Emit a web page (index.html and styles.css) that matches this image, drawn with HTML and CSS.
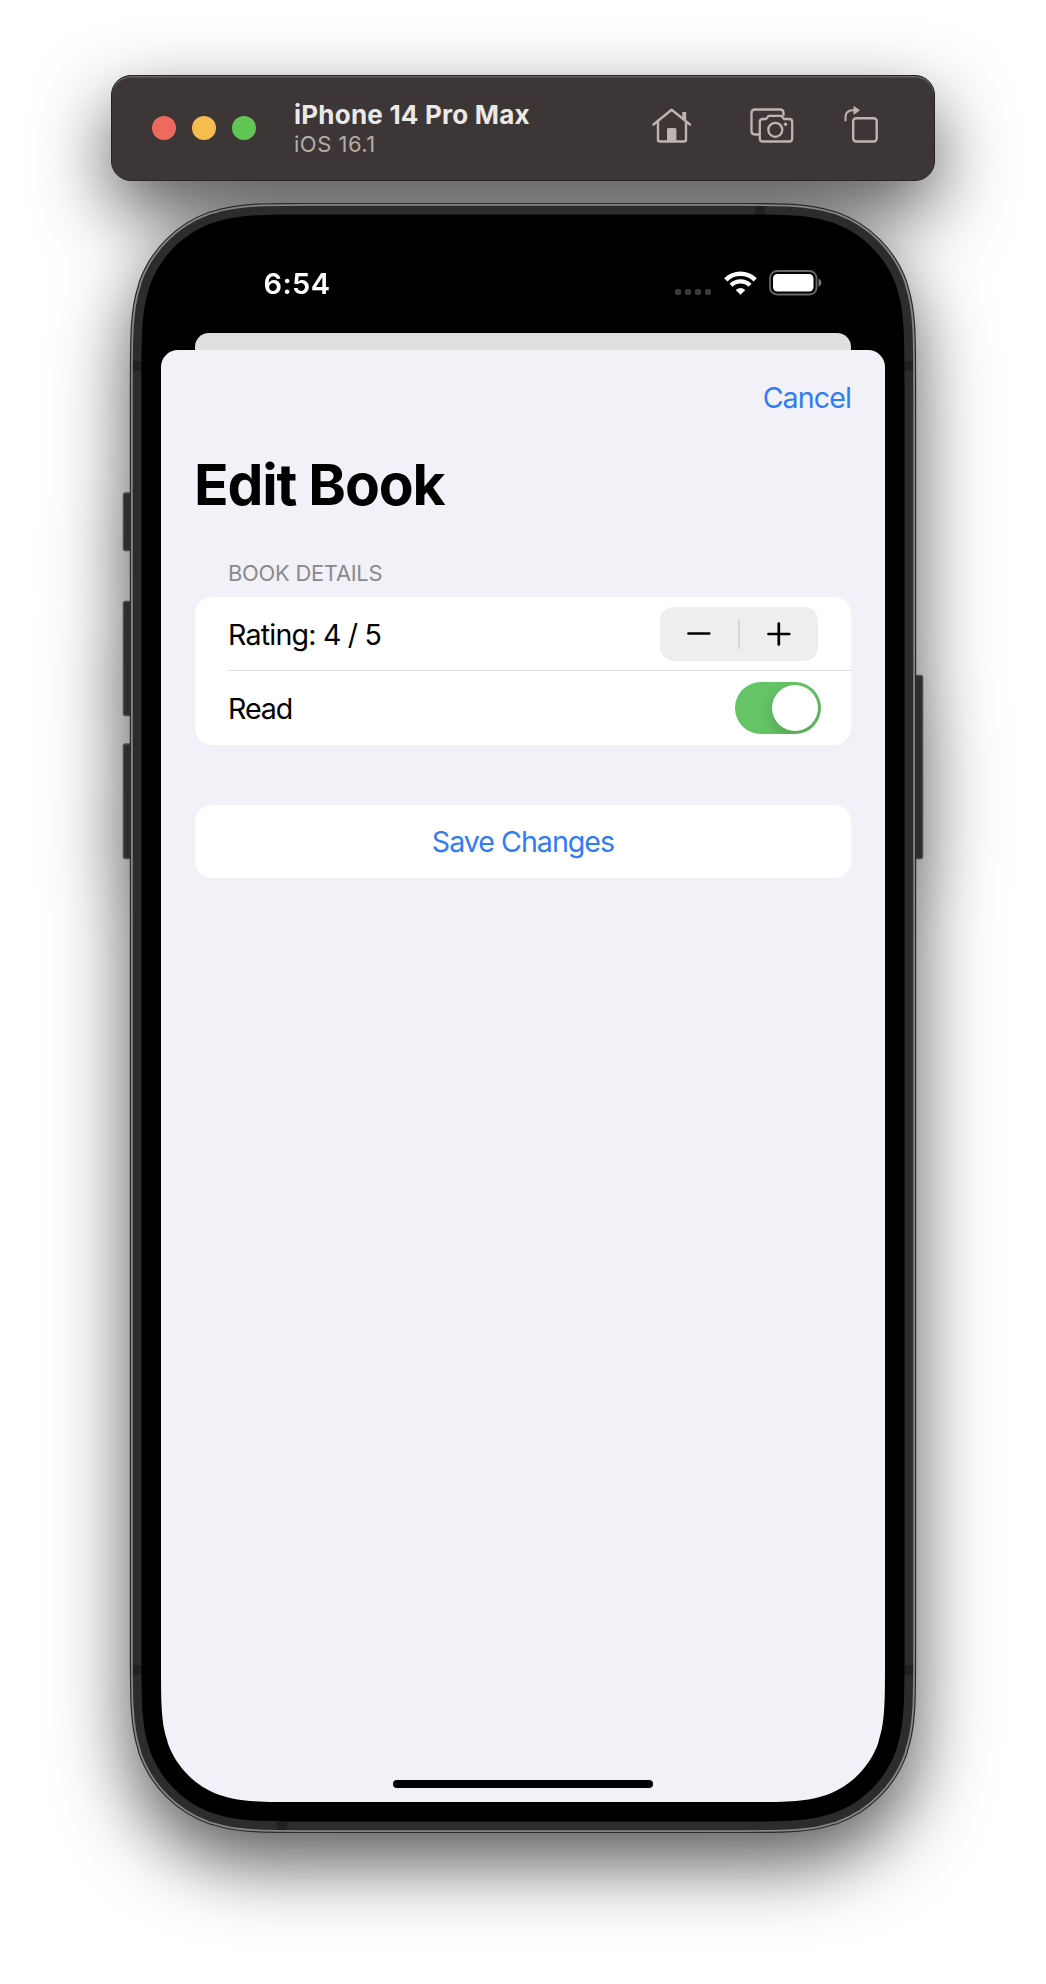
FILE: index.html
```html
<!DOCTYPE html>
<html lang="en">
<head>
<meta charset="utf-8">
<title>Edit Book</title>
<link rel="stylesheet" href="styles.css">
</head>
<body>
<main class="simulator">
  <header class="toolbar">
    <div class="lights">
      <span class="light light-close"></span>
      <span class="light light-min"></span>
      <span class="light light-zoom"></span>
    </div>
    <div class="device-name">
      <strong class="device-title">iPhone 14 Pro Max</strong>
      <span class="device-os">iOS 16.1</span>
    </div>
    <div class="tools">
      <svg class="tool" width="40" height="36" viewBox="0 0 40 36">
        <path d="M1.5 16.5 19.6 1.8 38 16.5M6 14V31.5q0 2 2 2H32q2 0 2-2V14M32.2 11V5" fill="none" stroke="currentColor" stroke-width="2.4" stroke-linecap="round" stroke-linejoin="round"/>
        <path d="M30.2 4h4v9l-4-3z" fill="currentColor"/>
        <path d="M15 33.5V21.5q0-1.5 1.5-1.5h6.400q1.500 0 1.500 1.500V33.500z" fill="currentColor"/>
      </svg>
      <svg class="tool" width="44" height="36" viewBox="0 0 44 36">
        <g fill="none" stroke="currentColor" stroke-width="2.300" stroke-linejoin="round">
          <path d="M33.500 8V5q0-3.500-3.500-3.500H5Q1.500 1.500 1.500 5V23q0 3.500 3.500 3.500H9.500"/>
          <path d="M12.800 11H16l2.700-3.200h12.600l2.700 3.200h5.200q3 0 3 3V30.500q0 3-3 3H12.800q-3 0-3-3V14q0-3 3-3z"/>
          <circle cx="25.300" cy="21.800" r="7"/>
        </g>
        <circle cx="35.500" cy="16.200" r="1.700" fill="currentColor"/>
      </svg>
      <svg class="tool" width="34" height="38" viewBox="0 0 34 38">
        <rect x="9.200" y="13.200" width="23.500" height="23.300" rx="3" fill="none" stroke="currentColor" stroke-width="2.400"/>
        <path d="M1.500 15.500V12.500Q1.500 5.500 8.500 5.300H11" fill="none" stroke="currentColor" stroke-width="2" stroke-linecap="round"/>
        <path d="M9.500 .8 16 5.300 9.500 10z" fill="currentColor"/>
      </svg>
    </div>
  </header>

  <section class="phone">
    <svg class="frame" width="802" height="1630" viewBox="-8 0 802 1630">
      <defs>
        <path id="bezel" d="M182.700 11.500H603.300c49.300 0 73.900 0 96.200 7.300l4.300 1.100c28.900 10.500 51.800 33.400 62.300 62.300l1.100 4.300c7.300 22.300 7.300 46.900 7.300 96.200V1447.300c0 49.300 0 73.900-7.300 96.200l-1.100 4.300c-10.500 28.900-33.400 51.800-62.300 62.300l-4.300 1.100c-22.300 7.300-46.900 7.300-96.200 7.300H182.700c-49.300 0-73.900 0-96.200-7.300l-4.300-1.100c-28.900-10.500-51.800-33.400-62.300-62.300l-1.100-4.300c-7.300-22.300-7.300-46.900-7.300-96.200V182.700c0-49.300 0-73.900 7.300-96.200l1.100-4.300c10.500-28.900 33.400-51.800 62.300-62.300l4.300-1.100c22.300-7.300 46.900-7.300 96.200-7.300z"/>
      </defs>
      <g fill="#2d2d2d" stroke="#4c4c4c" stroke-width="1.500">
        <rect x="-6.500" y="290" width="12" height="57.500" rx="2"/>
        <rect x="-6.500" y="398.500" width="12" height="114" rx="2"/>
        <rect x="-6.500" y="541" width="12" height="114.500" rx="2"/>
        <rect x="781" y="472.500" width="11.500" height="183" rx="2"/>
      </g>
      <use href="#bezel" stroke="#2a2a2a" stroke-width="23.400"/>
      <use href="#bezel" stroke="#858585" stroke-width="21"/>
      <use href="#bezel" stroke="#2c2c2c" stroke-width="17.400"/>
      <g fill="#202020">
        <rect x="625" y="3" width="10" height="10"/>
        <rect x="147" y="1617" width="10" height="10"/>
        <rect x="3" y="158" width="10" height="10"/>
        <rect x="773" y="158" width="10" height="10"/>
        <rect x="3" y="1462" width="10" height="10"/>
        <rect x="773" y="1462" width="10" height="10"/>
      </g>
      <use href="#bezel" fill="#000"/>
    </svg>

    <div class="screen">
      <div class="status">
        <span class="time">6:54</span>
        <div class="indicators">
          <svg width="36" height="6" viewBox="0 0 36 6" fill="#3a3a3a">
            <rect width="6" height="6" rx="1.800"/><rect x="10" width="6" height="6" rx="1.800"/><rect x="20" width="6" height="6" rx="1.800"/><rect x="30" width="6" height="6" rx="1.800"/>
          </svg>
          <svg class="wifi" width="33" height="24" viewBox="0 0 33 24" fill="none" stroke="#fff">
            <path d="M1.800 8.800A21 21 0 0 1 31.200 8.800" stroke-width="4.600"/>
            <path d="M7 14.300A13.500 13.500 0 0 1 26 14.300" stroke-width="4.400"/>
            <path d="M16.500 23.800 11.700 19Q16.500 15 21.300 19z" fill="#fff" stroke="none"/>
          </svg>
          <svg class="battery" width="54" height="26" viewBox="0 0 54 26">
            <rect x="1" y="1" width="46.500" height="23.500" rx="7" fill="none" stroke="#676767" stroke-width="1.800"/>
            <rect x="4" y="4" width="40.500" height="17.500" rx="4.500" fill="#fff"/>
            <path d="M49.500 8.500Q52.500 10 52.500 12.700T49.500 17z" fill="#777"/>
          </svg>
        </div>
      </div>
      <div class="sheet-behind"></div>
      <div class="sheet">
        <nav class="nav"><a class="cancel">Cancel</a></nav>
        <h1 class="title">Edit Book</h1>
        <h2 class="section-label">BOOK DETAILS</h2>
        <div class="card">
          <div class="row row-rating">
            <span class="label label-rating">Rating: 4 / 5</span>
            <div class="stepper">
              <svg width="24" height="24" viewBox="0 0 24 24" stroke="#000" stroke-width="2.700" stroke-linecap="round"><path d="M1.500 11.500H22.200"/></svg>
              <i class="stepper-line"></i>
              <svg width="24" height="24" viewBox="0 0 24 24" stroke="#000" stroke-width="2.700" stroke-linecap="round"><path d="M1.500 12H22.200M11.800 1.500V22.500"/></svg>
            </div>
          </div>
          <div class="row row-read">
            <span class="label label-read">Read</span>
            <div class="toggle"><span class="knob"></span></div>
          </div>
        </div>
        <div class="card save">Save Changes</div>
        <div class="home-bar"></div>
      </div>
    </div>
  </section>
</main>
</body>
</html>
```
FILE: styles.css
```css
* { box-sizing: border-box; }

body {
  margin: 0;
  background: #fff;
  font-family: Inter, "Liberation Sans", sans-serif;
  overflow: hidden;
}

.simulator {
  display: flex;
  flex-direction: column;
  align-items: center;
  height: 1984px;
  padding-top: 75px;
  gap: 22px;
  filter: drop-shadow(0 30px 37px rgba(0, 0, 0, .66));
}

.toolbar {
  display: flex;
  align-items: center;
  width: 824px;
  height: 106px;
  padding: 0 56px 0 40px;
  border: 1px solid #242424;
  border-radius: 20px;
  background: #3d3636;
  box-shadow: inset 0 1.500px 0 #666362;
}

.lights { display: flex; gap: 16px; width: 142px; }
.light { width: 24px; height: 24px; border-radius: 50%; }
.light-close { background: #ee6a5f; }
.light-min { background: #f5bd4f; }
.light-zoom { background: #61c554; }

.device-name { display: flex; flex-direction: column; padding-top: 2px; flex: 1; }
.device-title { font-size: 26px; line-height: 30px; letter-spacing: .22px; color: #ebe9e8; font-weight: 700; white-space: nowrap; }
.device-os { font-size: 22px; line-height: 29px; letter-spacing: .5px; color: #b3acab; }

.tools { display: flex; align-items: center; color: #bcb5b4; }
.tool { margin-top: -4px; }
.tool + .tool { margin-left: 58px; }
.tool:last-child { margin-left: 50px; margin-top: -8px; }

.phone { position: relative; width: 786px; height: 1630px; padding: 31px; }
.frame { position: absolute; left: -8px; top: 0; }

.screen { position: relative; display: flex; flex-direction: column; height: 1568px; }

.status { display: flex; justify-content: space-between; height: 99px; padding: 35px 62px 0 102.500px; }
.time { font-size: 29px; line-height: 29px; letter-spacing: .4px; font-weight: 600; color: #fff; }
.indicators { display: flex; align-items: flex-end; height: 25px; margin-top: 2px; }
.indicators > svg { display: block; margin-bottom: 1px; }
.indicators > .wifi { margin-left: 13px; }
.indicators > .battery { margin: 0 0 0 12px; }

.sheet-behind { height: 17px; margin: 0 34px; border-radius: 14px 14px 0 0; background: #dfdfdf; }

.sheet {
  display: flex;
  flex-direction: column;
  height: 1452px;
  padding: 28px 34px 14px;
  border-radius: 17px 17px 0 0;
  background: #f2f1f7;
  clip-path: path("M0 0H724V1310.400c0 40.800 0 61.200-6.100 79.600l-.8 3.500c-8.800 24-27.600 42.800-51.600 51.600l-3.500.8c-18.400 6.100-38.800 6.100-79.600 6.100H141.600c-40.800 0-61.200 0-79.600-6.100l-3.500-.8c-24-8.800-42.800-27.600-51.600-51.600l-.8-3.500c-6.100-18.400-6.100-38.800-6.100-79.600z");
}

.nav { display: flex; justify-content: flex-end; height: 40px; }
.cancel { font-size: 28.600px; line-height: 40px; letter-spacing: -.9px; color: #2f7cf6; }

.title { margin: 32px 0 0 -1px; font-size: 57px; line-height: 70px; letter-spacing: -1.200px; font-weight: 700; }
.section-label { margin: 38px 0 0 33px; font-size: 21.900px; line-height: 30px; height: 39px; letter-spacing: -.25px; font-weight: 400; color: #8a8a8e; }

.card { border-radius: 17px; background: #fff; }
.row { display: flex; align-items: center; justify-content: space-between; margin-left: 33px; height: 74px; font-size: 28.600px; }
.row-rating { border-bottom: 1px solid #dcdcde; padding-right: 33.500px; height: 74px; }
.row-read { padding-right: 30px; }
.label-rating { letter-spacing: -.8px; padding-top: 1px; }
.label-read { letter-spacing: -1.100px; }

.stepper { display: flex; align-items: center; justify-content: space-between; width: 158px; height: 54px; padding: 0 27px; border-radius: 14px; background: #eee; margin-top: 1px; }
.stepper-line { width: 2px; height: 30px; background: #d8d8d8; }

.toggle { display: flex; justify-content: flex-end; width: 86px; height: 52px; padding: 3px; border-radius: 26px; background: #65c466; overflow: hidden; }
.knob { width: 46px; height: 46px; border-radius: 50%; background: #fff; box-shadow: 0 5px 13px rgba(0, 0, 0, .18); }

.save { margin-top: 60px; height: 73px; line-height: 73px; font-size: 28.600px; letter-spacing: -1px; text-align: center; color: #2f7cf6; }

.home-bar { width: 260px; height: 8px; margin: auto auto 0; border-radius: 4px; background: #000; }
```
